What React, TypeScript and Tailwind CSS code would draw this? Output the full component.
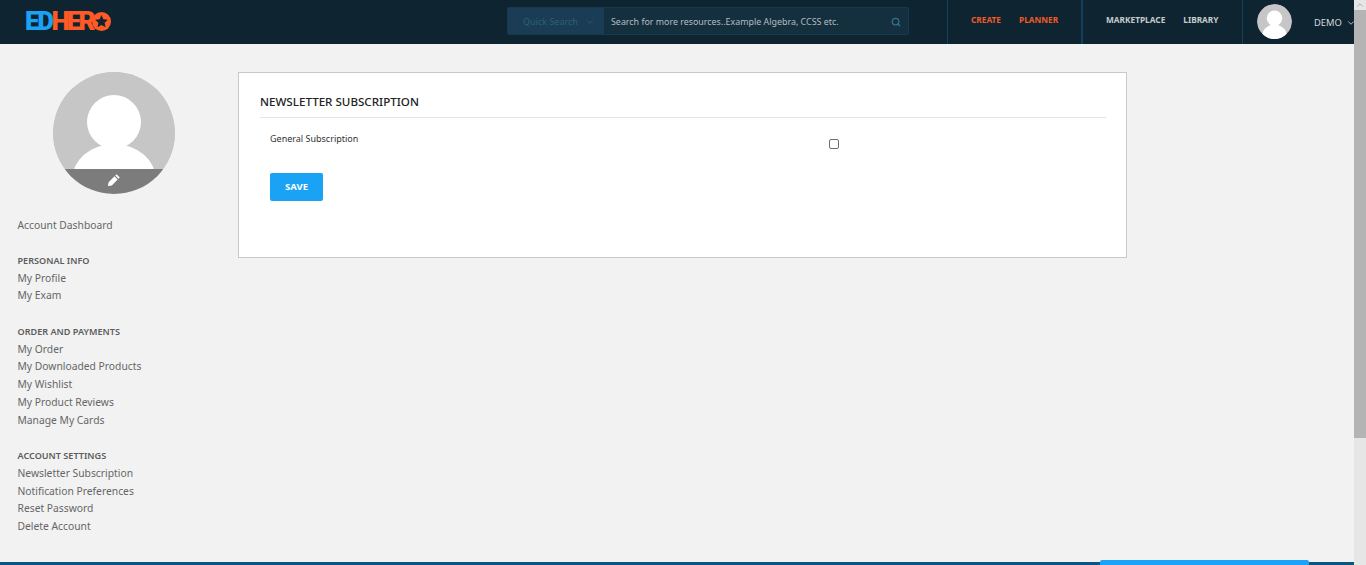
import { ChevronDown, Search, ChevronUp } from "lucide-react";

const sideGroups = [
  { title: "PERSONAL INFO", links: ["My Profile", "My Exam"] },
  {
    title: "ORDER AND PAYMENTS",
    links: ["My Order", "My Downloaded Products", "My Wishlist", "My Product Reviews", "Manage My Cards"],
  },
  {
    title: "ACCOUNT SETTINGS",
    links: ["Newsletter Subscription", "Notification Preferences", "Reset Password", "Delete Account"],
  },
];

// silhouette used by both avatars
const Silhouette = () => (
  <svg viewBox="0 0 122 122" className="block w-full h-full">
    <circle cx="61" cy="61" r="61" fill="#c6c6c6" />
    <circle cx="61" cy="50" r="27" fill="#fff" />
    <ellipse cx="61" cy="108" rx="42" ry="36" fill="#fff" />
  </svg>
);

function Header() {
  return (
    <header className="h-[44px] bg-[#0e2431] flex items-center shrink-0 overflow-hidden">
      {/* logo */}
      <div className="ml-[25px] w-[482px] shrink-0 flex items-center h-[20px] mb-[2px] font-['Roboto',sans-serif] font-black text-[26px] leading-none">
        <span className="text-[#1aa3f5] tracking-[-2.4px]">ED</span>
        <span className="text-[#ff5a26] tracking-[-3px]">HER</span>
        <svg viewBox="0 0 20 20" className="w-[19px] h-[19px]">
          <circle cx="10" cy="10" r="10" fill="#ff5a26" />
          <path d="M10 3.2l2 4.3 4.7.6-3.4 3.2.9 4.7-4.2-2.3-4.2 2.3.9-4.7-3.4-3.2 4.7-.6z" fill="#0e2431" />
        </svg>
      </div>

      {/* search */}
      <div className="w-[402px] h-[28px] mb-[2px] shrink-0 flex bg-[#14303f] border border-[#173a4f] rounded-[2px] text-[9px]">
        <div className="w-[96px] bg-[#1a3c54] flex items-center pl-[15px] pt-[1px] text-[#2c5f7c]">
          <span>Quick Search</span>
          <ChevronDown className="w-[10px] h-[10px] ml-[7px]" />
        </div>
        <div className="flex-1 flex items-center justify-between pl-[7px] pr-[7px] pt-[1px] text-[8.9px] text-[#b5bcc0]">
          <span>Search for more resources..Example Algebra, CCSS etc.</span>
          <Search className="w-[10px] h-[10px] text-[#35708f]" strokeWidth={3} />
        </div>
      </div>

      <div className="ml-[38px] h-full w-[136px] shrink-0 border-l border-[#14405c] border-r-2 flex items-center pb-[4px] pl-[23px] gap-[18px] text-[8.3px] font-bold text-[#f05a28]">
        <span>CREATE</span>
        <span>PLANNER</span>
      </div>
      <div className="h-full w-[160px] shrink-0 border-r border-[#14405c] flex items-center pb-[4px] pl-[23px] gap-[18px] text-[8.3px] font-bold text-[#c5cbce]">
        <span>MARKETPLACE</span>
        <span>LIBRARY</span>
      </div>
      <div className="w-[35px] h-[35px] shrink-0 rounded-full overflow-hidden ml-[14px] mb-[1px]">
        <Silhouette />
      </div>
      <div className="ml-[22px] shrink-0 flex items-center text-[9.4px] text-[#d5d9db] mt-[3px]">
        <span>DEMO</span>
        <ChevronDown className="w-[10px] h-[10px] ml-[4px]" />
      </div>
    </header>
  );
}

function Sidebar() {
  return (
    <aside className="w-[238px] shrink-0 pt-[28px] text-[10.3px] text-[#666]">
      <div className="ml-[53px] w-[122px] h-[122px] rounded-full overflow-hidden flex flex-col justify-end bg-[#c6c6c6] relative">
        <div className="absolute inset-0">
          <Silhouette />
        </div>
        <div className="relative h-[25px] bg-[#7c7c7c] flex justify-center pt-[4px]">
          <svg viewBox="0 0 14 14" className="w-[14px] h-[14px]">
            <path d="M9.6 1.2l3.2 3.2-1.3 1.3-3.2-3.2zM7.5 3.3l3.2 3.2-5.9 5.9-3.9.7.7-3.9z" fill="#fff" />
          </svg>
        </div>
      </div>
      <div className="pl-[17.5px] mt-[22px]">
        <div className="leading-[18px] h-[18px]">Account Dashboard</div>
        {sideGroups.map((g) => (
          <div key={g.title} className="mt-[17.5px]">
            <div className="leading-[18px] font-semibold text-[9.1px] text-[#5c5c5c]">{g.title}</div>
            {g.links.map((l) => (
              <div key={l} className="leading-[17.75px]">
                {l}
              </div>
            ))}
          </div>
        ))}
      </div>
    </aside>
  );
}

function Panel() {
  return (
    <section className="mt-[28px] w-[889px] h-[186px] bg-white border border-[#c9c9c9] pl-[21px] pr-[20px]">
      <h2 className="h-[45px] pt-[21px] leading-[16px] border-b border-[#e4e4e4] text-[11.6px] font-medium text-[#222]">
        NEWSLETTER SUBSCRIPTION
      </h2>
      <div className="flex pl-[10px] pt-[15px] h-[55px] text-[9px] text-[#333]">
        <div className="w-[559px] leading-[12px]">General Subscription</div>
        <input type="checkbox" readOnly className="w-[10px] h-[10px] mt-[6px] appearance-none border border-[#6e6e6e] rounded-[2px]" />
      </div>
      <button className="block ml-[10px] w-[53px] h-[28px] bg-[#1aa3f5] rounded-[2px] text-white text-[9.5px] font-bold">
        SAVE
      </button>
    </section>
  );
}

export default function App() {
  return (
    <div className="h-[565px] flex overflow-hidden bg-[#f2f2f2] font-['Noto_Sans',sans-serif]">
      <div className="flex-1 flex flex-col min-w-0">
        <Header />
        <main className="flex-1 flex min-h-0">
          <Sidebar />
          <Panel />
        </main>
        {/* footer edge */}
        <div className="h-[5px] flex items-end shrink-0">
          <div className="w-[1100px] h-[3px] bg-[#0b5582]" />
          <div className="w-[209px] h-[5px] bg-[#1aa3f9] rounded-t-[2px]" />
          <div className="flex-1 h-[3px] bg-[#0b5582]" />
        </div>
      </div>
      {/* page scrollbar */}
      <div className="w-[12px] shrink-0 bg-[#e6e6e6] flex flex-col items-center">
        <ChevronUp className="w-[10px] h-[10px] text-[#a0a0a0]" />
        <div className="w-full h-[428px] bg-[#b4b4b4]" />
      </div>
    </div>
  );
}
